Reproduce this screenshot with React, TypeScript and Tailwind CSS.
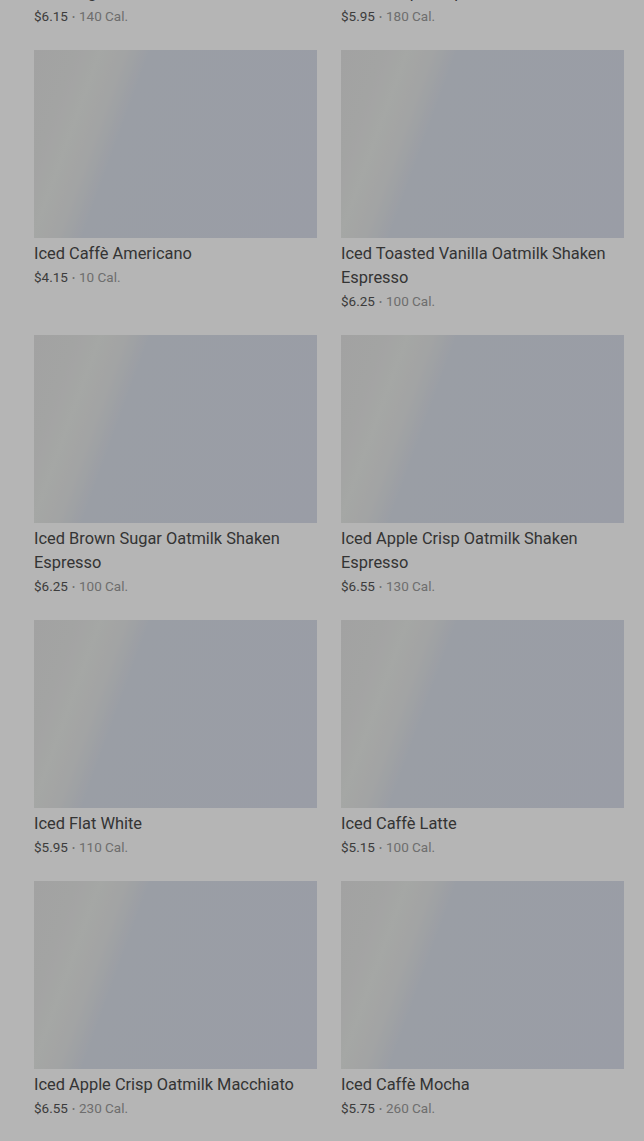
import React from "react";

type Drink = { name: string; price: string; cal: number };

const drinks: Drink[] = [
  { name: "Iced Sugar Cookie Almondmilk Latte", price: "$6.15", cal: 140 },
  { name: "Iced Pumpkin Spice Latte", price: "$5.95", cal: 180 },
  { name: "Iced Caffè Americano", price: "$4.15", cal: 10 },
  { name: "Iced Toasted Vanilla Oatmilk Shaken Espresso", price: "$6.25", cal: 100 },
  { name: "Iced Brown Sugar Oatmilk Shaken Espresso", price: "$6.25", cal: 100 },
  { name: "Iced Apple Crisp Oatmilk Shaken Espresso", price: "$6.55", cal: 130 },
  { name: "Iced Flat White", price: "$5.95", cal: 110 },
  { name: "Iced Caffè Latte", price: "$5.15", cal: 100 },
  { name: "Iced Apple Crisp Oatmilk Macchiato", price: "$6.55", cal: 230 },
  { name: "Iced Caffè Mocha", price: "$5.75", cal: 260 },
  { name: "Iced Caramel Macchiato", price: "$5.95", cal: 250 },
  { name: "Iced White Chocolate Mocha", price: "$6.15", cal: 420 },
];

const DrinkCard = ({ name, price, cal }: Drink) => {
  return (
    <div className="flex flex-col">
      <div className="h-[188px] w-full bg-[linear-gradient(110deg,#e5e5e5_0%,#e6e7e6_12%,#e9ebe9_19%,#e5e7e7_26%,#dadfe9_33%,#d9deea_100%)]" />
      <span className="mt-1 text-[16.4px] leading-6 text-[#4a4a4a]">{name}</span>
      <div className="flex h-6 items-center gap-1 text-[13.5px] leading-none">
        <span className="text-[#555555]">{price}</span>
        <span className="text-[9px] text-[#9b9b9b]">•</span>
        <span className="text-[#9b9b9b]">{cal} Cal.</span>
      </div>
    </div>
  );
};

export default function App() {
  return (
    <div className="relative min-h-[1141px] overflow-hidden bg-white font-['Roboto',Arial,sans-serif]">
      <div className="-mt-[211px] grid grid-cols-2 gap-x-6 gap-y-[21px] pl-[34px] pr-[20px]">
        {drinks.map((d) => (
          <DrinkCard key={d.name} {...d} />
        ))}
      </div>
      <div className="fixed inset-0 bg-black/[0.29]" />
    </div>
  );
}
